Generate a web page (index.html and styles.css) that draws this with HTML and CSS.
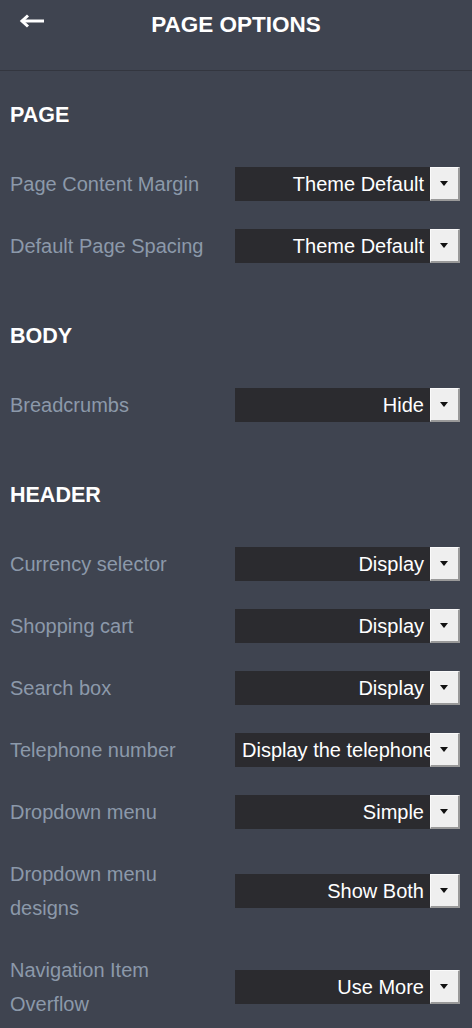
FILE: index.html
```html
<!DOCTYPE html>
<html lang="en">
<head>
    <meta charset="UTF-8">
    <meta name="viewport" content="width=device-width, initial-scale=1.0">
    <title>Page Options</title>
    <link rel="stylesheet" href="styles.css">
</head>
<body>

    <header class="top-bar">
        <a class="back" href="#">
            <svg width="26" height="14" viewBox="0 0 26 14">
                <path d="M4 7 H25" stroke="#fff" stroke-width="3" fill="none"/>
                <path d="M9 1.5 L3 7 L9 12.5" stroke="#fff" stroke-width="3" fill="none"/>
            </svg>
        </a>
        <h1>PAGE OPTIONS</h1>
    </header>

    <div class="options">

        <!-- Page -->
        <section class="group">
            <h2>PAGE</h2>
            <div class="row">
                <label>Page Content Margin</label>
                <div class="select"><span class="value">Theme Default</span><span class="btn"></span></div>
            </div>
            <div class="row">
                <label>Default Page Spacing</label>
                <div class="select"><span class="value">Theme Default</span><span class="btn"></span></div>
            </div>
        </section>

        <!-- Body -->
        <section class="group">
            <h2>BODY</h2>
            <div class="row">
                <label>Breadcrumbs</label>
                <div class="select"><span class="value">Hide</span><span class="btn"></span></div>
            </div>
        </section>

        <!-- Header -->
        <section class="group">
            <h2>HEADER</h2>
            <div class="row">
                <label>Currency selector</label>
                <div class="select"><span class="value">Display</span><span class="btn"></span></div>
            </div>
            <div class="row">
                <label>Shopping cart</label>
                <div class="select"><span class="value">Display</span><span class="btn"></span></div>
            </div>
            <div class="row">
                <label>Search box</label>
                <div class="select"><span class="value">Display</span><span class="btn"></span></div>
            </div>
            <div class="row">
                <label>Telephone number</label>
                <div class="select"><span class="value">Display the telephone number</span><span class="btn"></span></div>
            </div>
            <div class="row">
                <label>Dropdown menu</label>
                <div class="select"><span class="value">Simple</span><span class="btn"></span></div>
            </div>
            <div class="row">
                <label>Dropdown menu designs</label>
                <div class="select"><span class="value">Show Both</span><span class="btn"></span></div>
            </div>
            <div class="row">
                <label>Navigation Item Overflow</label>
                <div class="select"><span class="value">Use More</span><span class="btn"></span></div>
            </div>
        </section>

    </div>

</body>
</html>
```

FILE: styles.css
```css
body {
    margin: 0;
    padding: 0;
    background-color: #3f4450;
    font-family: "Liberation Sans", Arial, sans-serif;
    color: white;
}

.top-bar {
    height: 70px;
    border-bottom: 1px solid #33363f;
    position: relative;
}

.top-bar h1 {
    margin: 0;
    padding-top: 12px;
    font-size: 22.5px;
    line-height: 26px;
    font-weight: bold;
    text-align: center;
}

.top-bar .back {
    position: absolute;
    left: 19px;
    top: 14px;
    display: block;
    line-height: 0;
}

.options {
    display: flex;
    flex-direction: column;
    padding: 0 12px 0 10px;
}

.group {
    display: flex;
    flex-direction: column;
}

.group h2 {
    margin: 33px 0 40px;
    font-size: 21.5px;
    line-height: 24px;
    font-weight: bold;
}

.group:first-child h2 {
    margin-top: 32px;
}

.row {
    display: grid;
    grid-template-columns: 1fr 225px;
    column-gap: 12px;
    align-items: center;
    margin-bottom: 28px;
}

.row label {
    max-width: 205px;
    color: #8c99aa;
    font-size: 20px;
    line-height: 34px;
}

.select {
    display: flex;
    height: 34px;
    background-color: #2b2b2f;
}

.select .value {
    flex: 1;
    min-width: 0;
    overflow: hidden;
    white-space: nowrap;
    text-align: right;
    padding: 0 6px 0 7px;
    font-size: 20px;
    line-height: 34px;
}

.select .btn {
    width: 27px;
    background-color: #efefef;
    border-top: 1px solid #fafafa;
    border-left: 1px solid #fafafa;
    border-right: 2px solid #999;
    border-bottom: 2px solid #999;
    position: relative;
}

.select .btn::after {
    content: "";
    position: absolute;
    left: 9px;
    top: 13px;
    border-left: 4px solid transparent;
    border-right: 4px solid transparent;
    border-top: 5px solid #111;
}
```
